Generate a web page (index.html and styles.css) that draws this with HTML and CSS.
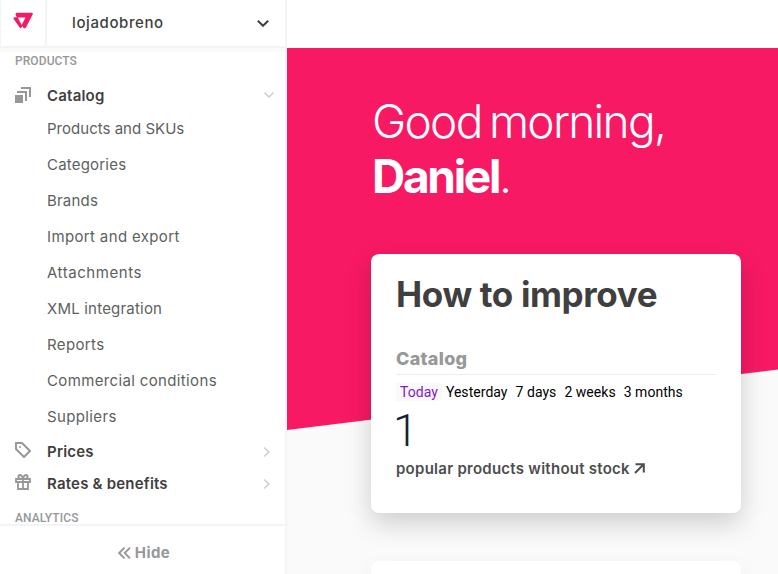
FILE: index.html
```html
<!DOCTYPE html>
<html lang="en">
<head>
<meta charset="utf-8">
<title>Admin</title>
<link rel="stylesheet" href="styles.css">
</head>
<body>
<div class="app">
  <aside class="sidebar">
    <header class="account">
      <div class="logo">
        <svg width="21" height="18" viewBox="0 0 21 18"><path d="M4 .8H18.5Q20.4 .8 19.6 2.5L13.2 15Q11.8 17.4 10.2 15.4L9.4 14L8.7 15.3Q7.6 17 6.5 15.2L.8 7.3Q-.2 5.5 1.8 5.2H3.8L2.6 3Q2.2 1 4 .8Z" fill="#f71963"/><path d="M4.800 5.500H12.500L8.700 13Z" fill="#fff"/></svg>
      </div>
      <div class="store">
        <span class="store-name">lojadobreno</span>
        <svg width="12" height="8" viewBox="0 0 12 8"><path d="M.8 1.800L6 6.800L11.200 1.800" fill="none" stroke="#3f3f40" stroke-width="2"/></svg>
      </div>
    </header>
    <nav class="menu">
      <h2 class="section"><span>PRODUCTS</span></h2>
      <div class="group group-open">
        <svg class="group-icon" width="16" height="16" viewBox="0 0 16 16"><path d="M0 8h8v8H0z" fill="#979899"/><path d="M2 5h9v9M6 1h9v9" fill="none" stroke="#979899" stroke-width="2"/></svg>
        <span class="group-name">Catalog</span>
        <svg width="10" height="6" viewBox="0 0 10 6"><path d="M.5 .5L5 5L9.500 .5" fill="none" stroke="#cacbcc" stroke-width="1.4"/></svg>
      </div>
      <ul class="items">
        <li class="tight">Products and SKUs</li>
        <li class="snug">Categories</li>
        <li class="snug">Brands</li>
        <li>Import and export</li>
        <li class="loose">Attachments</li>
        <li class="snug">XML integration</li>
        <li>Reports</li>
        <li>Commercial conditions</li>
        <li>Suppliers</li>
      </ul>
      <div class="group">
        <svg class="group-icon" width="16" height="16" viewBox="0 0 16 16"><path d="M1 1H7L15 9L9 15L1 7Z" fill="none" stroke="#979899" stroke-width="2"/><circle cx="5" cy="5" r="1" fill="#979899"/></svg>
        <span class="group-name">Prices</span>
        <svg width="7" height="10" viewBox="0 0 7 10"><path d="M1 .5L6 5L1 9.500" fill="none" stroke="#cacbcc" stroke-width="1.4"/></svg>
      </div>
      <div class="group">
        <svg class="group-icon" width="16" height="16" viewBox="0 0 16 16"><path d="M1 5H15V8H1ZM3 8V15H13V8M8 5V15M8 4.500C7 1.500 6 1 5 1Q3.400 1 3.400 2.600Q3.400 4.500 5 4.500M8 4.500C9 1.500 10 1 11 1Q12.600 1 12.600 2.600Q12.600 4.500 11 4.500" fill="none" stroke="#979899" stroke-width="1.8"/></svg>
        <span class="group-name">Rates &amp; benefits</span>
        <svg width="7" height="10" viewBox="0 0 7 10"><path d="M1 .5L6 5L1 9.500" fill="none" stroke="#cacbcc" stroke-width="1.4"/></svg>
      </div>
      <h2 class="section analytics"><span>ANALYTICS</span></h2>
    </nav>
    <footer class="hide">
      <svg width="13" height="12" viewBox="0 0 13 12"><path d="M6.500 .7L1.200 6L6.500 11.300M12 .7L6.700 6L12 11.300" fill="none" stroke="#979899" stroke-width="1.9"/></svg>
      <span class="hide-label">Hide</span>
    </footer>
  </aside>
  <div class="topbar"></div>
  <main class="content">
    <h1 class="greeting"><span class="good">Good morning,</span><span class="who"><b>Daniel</b>.</span></h1>
    <section class="card">
      <h2 class="card-title"><span>How to improve</span></h2>
      <h3 class="card-sub"><span>Catalog</span></h3>
      <div class="tabs">
        <span class="tab active">Today</span><span class="tab">Yesterday</span><span class="tab">7 days</span><span class="tab">2 weeks</span><span class="tab">3 months</span>
      </div>
      <div class="count">1</div>
      <div class="link"><span class="link-text">popular products without stock</span>
        <svg width="11" height="11" viewBox="0 0 11 11"><path d="M1.500 1.200H9.800V9.500M9.500 1.500L1 10" fill="none" stroke="#4c4d4e" stroke-width="2"/></svg>
      </div>
    </section>
    <section class="card next"></section>
  </main>
</div>
</body>
</html>
```
FILE: styles.css
```css
* { box-sizing: border-box; }
body { margin: 0; font-family: Inter, "Liberation Sans", sans-serif; color: #3f3f40; }
h1, h2, h3, ul { margin: 0; padding: 0; list-style: none; }
svg { display: block; flex: none; }
span { white-space: nowrap; }
.app { display: grid; grid-template: 48px 526px / 287px 491px; width: 778px; height: 574px; overflow: hidden; background: #fff; }
.sidebar { grid-row: 1 / 3; display: flex; flex-direction: column; border-right: 2px solid #f2f4f5; }
.account { display: flex; height: 48px; border-bottom: 2px solid #f2f4f5; border-left: 1px solid #f2f4f5; }
.logo { width: 46px; padding: 12px 0 0 12px; border-right: 2px solid #f2f4f5; }
.store { flex: 1; display: flex; align-items: center; justify-content: space-between; padding: 0 16px 0 25px; }
.store-name { font-size: 15px; font-weight: 500; letter-spacing: .6px; margin-top: -1px; }
.menu { height: 476px; overflow: hidden; box-shadow: inset 0 4px 0 #fafafa; }
.section { height: 26px; padding-left: 15px; font: 500 12px/26px Roboto, sans-serif; letter-spacing: .08px; color: #979899; }
.analytics { padding-top: 5px; }
.group { display: flex; align-items: center; height: 32px; padding: 0 15px; font-size: 15px; font-weight: 600; letter-spacing: .2px; }
.group-open { height: 37px; padding: 6px 11px 0 15px; }
.group-icon { margin: -4px 16px 0 0; }
.group-name { flex: 1; margin-top: -1px; }
.group-open > svg { position: relative; top: -1px; }
.group-open > .group-icon { top: 1px; }
.items { height: 325px; }
.items li { height: 36px; padding-left: 47px; font-size: 15px; line-height: 36px; letter-spacing: .36px; color: #5e5f60; }
.items .tight { letter-spacing: .02px; }
.items .snug { letter-spacing: .2px; }
.items .loose { letter-spacing: .55px; }
.hide { flex: 1; display: flex; justify-content: center; align-items: center; gap: 4px; padding: 5px 0 0 3px; border-top: 2px solid #f2f4f5; font-size: 15px; font-weight: 700; letter-spacing: .4px; color: #979899; }
.topbar { background: #fff; }
.content { padding: 46px 37px 0 84px; background: #fafafa; position: relative; z-index: 0; overflow: hidden; }
.content::before { content: ""; position: absolute; z-index: -1; inset: 0; background: #f71963; clip-path: polygon(0 0, 100% 0, 100% 321.500px, 0 382px); }
.greeting { height: 160px; padding-left: 1px; color: #fff; font-weight: 300; font-size: 46px; line-height: 55px; }
.greeting > span { display: block; }
.good { letter-spacing: -1.700px; word-spacing: -4px; }
.who { letter-spacing: -2.300px; }
.greeting b { font-weight: 700; }
.card { height: 259px; border-radius: 8px; background: #fff; padding: 20px 25px; box-shadow: 0 10px 26px rgba(0, 0, 0, .18); }
.next { margin-top: 48px; box-shadow: 0 8px 24px rgba(0, 0, 0, .05); }
.card-title { height: 72px; font-size: 35px; line-height: 40px; font-weight: 700; letter-spacing: -.36px; }
.card-sub { height: 29px; width: 321px; font-size: 18px; line-height: 25px; font-weight: 800; letter-spacing: .3px; color: #979899; border-bottom: 1px solid #eee; }
.tabs { display: flex; margin-top: 8px; height: 18px; font: 400 14px/18px Roboto, sans-serif; letter-spacing: .04px; color: #000; }
.tab { padding: 0 4px; }
.active { color: #8914cc; background: #f7f9fa; }
.count { height: 57px; margin-left: -3px; font: 300 45px/60px Roboto, sans-serif; color: #142032; }
.link { display: flex; align-items: center; gap: 4px; height: 20px; font-size: 15px; font-weight: 600; letter-spacing: .26px; color: #4c4d4e; }
```
